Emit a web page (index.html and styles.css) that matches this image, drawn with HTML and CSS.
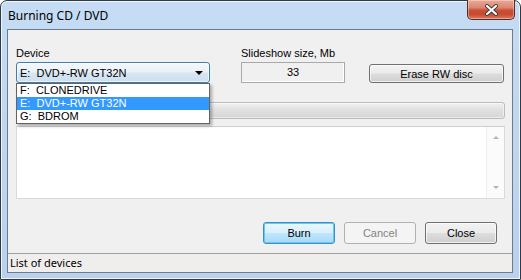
FILE: index.html
```html
<!DOCTYPE html>
<html lang="en">
<head>
    <meta charset="UTF-8">
    <title>Burning CD / DVD</title>
    <link rel="stylesheet" href="styles.css">
</head>
<body>
    <div class="window">
        <div class="titlebar">
            <span class="title">Burning CD / DVD</span>
            <button class="close-btn" aria-label="Close">
                <svg width="13" height="12" viewBox="0 0 13 12">
                    <path d="M2 2 L11 10 M11 2 L2 10" stroke="#3a3a3a" stroke-width="4" stroke-linecap="round"/>
                    <path d="M2 2 L11 10 M11 2 L2 10" stroke="#ffffff" stroke-width="2.2" stroke-linecap="round"/>
                </svg>
            </button>
        </div>

        <div class="client">
            <div class="form">
                <div class="top-row">
                    <div class="field device-field">
                        <label class="label">Device</label>
                        <div class="combo">
                            <span class="combo-text">E:  DVD+-RW GT32N</span>
                            <span class="combo-arrow"></span>
                        </div>
                        <ul class="dropdown">
                            <li>F:  CLONEDRIVE</li>
                            <li class="selected">E:  DVD+-RW GT32N</li>
                            <li>G:  BDROM</li>
                        </ul>
                    </div>
                    <div class="field size-field">
                        <label class="label">Slideshow size, Mb</label>
                        <div class="readonly-box">33</div>
                    </div>
                    <button class="btn erase-btn">Erase RW disc</button>
                </div>

                <div class="progress"></div>

                <div class="memo">
                    <div class="scrollbar">
                        <span class="arrow-up"></span>
                        <span class="arrow-down"></span>
                    </div>
                </div>

                <div class="actions">
                    <button class="btn btn-default">Burn</button>
                    <button class="btn btn-disabled">Cancel</button>
                    <button class="btn">Close</button>
                </div>
            </div>

            <div class="statusbar">List of devices</div>
        </div>
    </div>
</body>
</html>
```

FILE: styles.css
```css
body {
    margin: 0;
    background: #ffffff;
    font-family: "Liberation Sans", Arial, sans-serif;
    font-size: 11px;
    color: #000000;
}

.window {
    box-sizing: border-box;
    width: 521px;
    height: 280px;
    display: flex;
    flex-direction: column;
    padding: 0 7px 6px 6px;
    border: 1px solid #2f3a47;
    border-radius: 7px 7px 0 0;
    background: linear-gradient(to bottom, #c5dcf4 0%, #bfd7f1 40%, #b9d1ec 100%);
    box-shadow: inset 0 0 0 1px rgba(255, 255, 255, 0.75);
}

/* title bar */
.titlebar {
    height: 28px;
    display: flex;
    align-items: center;
    justify-content: space-between;
}

.title {
    padding-left: 1px;
    font-family: "Noto Sans", "Open Sans", sans-serif;
    font-size: 12px;
    color: #000000;
}

.close-btn {
    align-self: flex-start;
    box-sizing: border-box;
    width: 48px;
    height: 20px;
    margin: -1px -2px 0 0;
    padding: 0;
    display: flex;
    align-items: center;
    justify-content: center;
    border: 1px solid #5b2a22;
    border-top: none;
    border-radius: 0 0 5px 5px;
    background: linear-gradient(to bottom, #e9a999 0%, #dc8670 40%, #c84f34 55%, #c74a2f 75%, #dc7a5e 100%);
    box-shadow: inset 0 0 0 1px rgba(255, 255, 255, 0.35);
}

.close-btn svg {
    display: block;
}

/* client area */
.client {
    flex: 1;
    display: flex;
    flex-direction: column;
    border: 1px solid #6d7b8c;
    background: #f0f0f0;
}

.form {
    flex: 1;
    display: flex;
    flex-direction: column;
    padding: 16px 7px 0 8px;
}

.top-row {
    display: flex;
    align-items: flex-end;
}

.field {
    display: flex;
    flex-direction: column;
}

.label {
    height: 14px;
    line-height: 14px;
    margin-bottom: 2px;
    white-space: nowrap;
}

.device-field {
    position: relative;
    width: 194px;
}

.size-field {
    width: 104px;
    margin-left: 31px;
}

.combo {
    box-sizing: border-box;
    height: 21px;
    display: flex;
    align-items: center;
    justify-content: space-between;
    padding: 0 6px 0 3px;
    border: 1px solid #3c7fb1;
    border-radius: 3px;
    background: linear-gradient(to bottom, #f4f8fb 0%, #eaf1f7 48%, #d9e6f1 52%, #cddfee 100%);
    box-shadow: inset 0 0 0 1px rgba(255, 255, 255, 0.6);
}

.combo-text,
.dropdown li {
    white-space: pre;
}

.combo-arrow {
    width: 0;
    height: 0;
    border-left: 4px solid transparent;
    border-right: 4px solid transparent;
    border-top: 4px solid #000000;
}

.dropdown {
    position: absolute;
    top: 100%;
    left: 0;
    z-index: 2;
    box-sizing: border-box;
    width: 194px;
    margin: 0;
    padding: 0;
    list-style: none;
    border: 1px solid #646464;
    background: #ffffff;
    box-shadow: 2px 2px 3px rgba(0, 0, 0, 0.3);
}

.dropdown li {
    height: 13px;
    line-height: 13px;
    padding-left: 3px;
}

.dropdown li.selected {
    background: #3399ff;
    color: #ffffff;
}

.readonly-box {
    box-sizing: border-box;
    height: 21px;
    line-height: 19px;
    text-align: center;
    border: 1px solid #a9a9a9;
    background: #f0f0f0;
    box-shadow: inset -1px -1px 0 #ffffff;
}

/* buttons */
.btn {
    box-sizing: border-box;
    width: 72px;
    height: 22px;
    padding: 0;
    font-family: "Liberation Sans", Arial, sans-serif;
    font-size: 11px;
    color: #000000;
    border: 1px solid #707070;
    border-radius: 3px;
    background: linear-gradient(to bottom, #f2f2f2 0%, #ebebeb 48%, #dddddd 52%, #cfcfcf 100%);
    box-shadow: inset 0 0 0 1px rgba(255, 255, 255, 0.7);
}

.erase-btn {
    width: 135px;
    height: 19px;
    margin-left: 24px;
}

.btn-default {
    border-color: #3c8ec4;
    background: linear-gradient(to bottom, #eaf6fd 0%, #d9f0fc 48%, #bee6fd 52%, #a7d9f5 100%);
    box-shadow: inset 0 0 0 1px #62cbf5;
}

.btn-disabled {
    color: #838383;
    border-color: #adb2b5;
    background: #f4f4f4;
    box-shadow: none;
}

.progress {
    box-sizing: border-box;
    height: 17px;
    margin-top: 19px;
    border: 1px solid #bcbcbc;
    border-radius: 3px;
    background: linear-gradient(to bottom, #f2f2f2 0%, #e0e0e0 45%, #d6d6d6 100%);
    box-shadow: inset 0 0 0 1px rgba(255, 255, 255, 0.5);
}

.memo {
    box-sizing: border-box;
    height: 73px;
    margin-top: 7px;
    display: flex;
    justify-content: flex-end;
    border: 1px solid #dadada;
    border-top-color: #cfcfcf;
    background: #ffffff;
}

.scrollbar {
    width: 17px;
    display: flex;
    flex-direction: column;
    align-items: center;
    justify-content: space-between;
    padding: 9px 0 9px;
    background: #fbfbfb;
    border-left: 1px solid #f0f0f0;
}

.arrow-up,
.arrow-down {
    width: 0;
    height: 0;
    border-left: 3px solid transparent;
    border-right: 3px solid transparent;
}

.arrow-up {
    border-bottom: 3px solid #b4b4b4;
}

.arrow-down {
    border-top: 3px solid #b4b4b4;
}

.actions {
    display: flex;
    justify-content: flex-end;
    gap: 9px;
    margin-top: 23px;
    padding-right: 8px;
}

/* status bar */
.statusbar {
    box-sizing: border-box;
    height: 19px;
    line-height: 18px;
    padding-left: 2px;
    border-top: 1px solid #a0a0a0;
    background: #f0eeed;
    font-family: "Noto Sans", "Open Sans", sans-serif;
    font-size: 11px;
}
```
